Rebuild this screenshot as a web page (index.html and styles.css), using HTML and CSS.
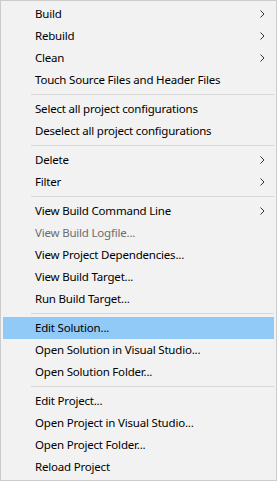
FILE: index.html
```html
<!DOCTYPE html>
<html lang="en">
<head>
  <meta charset="UTF-8">
  <title>Context Menu</title>
  <link rel="stylesheet" href="styles.css">
</head>
<body>
  <!-- CONTEXT MENU -->
  <div class="menu">
    <div class="menu-item">Build<span class="arrow"><svg width="5" height="8" viewBox="0 0 5 8"><path d="M0.5 0.5 L4 4 L0.5 7.5" fill="none" stroke="#333" stroke-width="1"/></svg></span></div>
    <div class="menu-item">Rebuild<span class="arrow"><svg width="5" height="8" viewBox="0 0 5 8"><path d="M0.5 0.5 L4 4 L0.5 7.5" fill="none" stroke="#333" stroke-width="1"/></svg></span></div>
    <div class="menu-item">Clean<span class="arrow"><svg width="5" height="8" viewBox="0 0 5 8"><path d="M0.5 0.5 L4 4 L0.5 7.5" fill="none" stroke="#333" stroke-width="1"/></svg></span></div>
    <div class="menu-item">Touch Source Files and Header Files</div>
    <div class="separator"></div>
    <div class="menu-item">Select all project configurations</div>
    <div class="menu-item">Deselect all project configurations</div>
    <div class="separator"></div>
    <div class="menu-item">Delete<span class="arrow"><svg width="5" height="8" viewBox="0 0 5 8"><path d="M0.5 0.5 L4 4 L0.5 7.5" fill="none" stroke="#333" stroke-width="1"/></svg></span></div>
    <div class="menu-item">Filter<span class="arrow"><svg width="5" height="8" viewBox="0 0 5 8"><path d="M0.5 0.5 L4 4 L0.5 7.5" fill="none" stroke="#333" stroke-width="1"/></svg></span></div>
    <div class="separator"></div>
    <div class="menu-item">View Build Command Line<span class="arrow"><svg width="5" height="8" viewBox="0 0 5 8"><path d="M0.5 0.5 L4 4 L0.5 7.5" fill="none" stroke="#333" stroke-width="1"/></svg></span></div>
    <div class="menu-item disabled">View Build Logfile...</div>
    <div class="menu-item">View Project Dependencies...</div>
    <div class="menu-item">View Build Target...</div>
    <div class="menu-item">Run Build Target...</div>
    <div class="separator"></div>
    <div class="menu-item active">Edit Solution...</div>
    <div class="menu-item">Open Solution in Visual Studio...</div>
    <div class="menu-item">Open Solution Folder...</div>
    <div class="separator"></div>
    <div class="menu-item">Edit Project...</div>
    <div class="menu-item">Open Project in Visual Studio...</div>
    <div class="menu-item">Open Project Folder...</div>
    <div class="menu-item">Reload Project</div>
  </div>
</body>
</html>
```

FILE: styles.css
```css
/* Reset */
* {
  margin: 0;
  padding: 0;
  box-sizing: border-box;
}
body {
  font-family: 'Noto Sans', sans-serif;
  font-size: 11.5px;
  letter-spacing: -0.2px;
  background-color: #fff;
}
/* Menu box */
.menu {
  width: 277px;
  height: 481px;
  background-color: #f2f2f2;
  border: 1px solid #cccccc;
  padding: 2px;
}
.menu-item {
  display: flex;
  align-items: center;
  height: 22px;
  padding-left: 32px;
  padding-right: 9px;
  padding-bottom: 1px;
  color: #000;
  white-space: nowrap;
  cursor: default;
}
.menu-item.disabled {
  color: #6d6d6d;
}
.menu-item.active {
  background-color: #91c9f7;
}
.arrow {
  margin-left: auto;
  display: flex;
  align-items: center;
}
/* Separator line */
.separator {
  height: 7px;
  padding-top: 3px;
  margin-left: 28px;
}
.separator::before {
  content: '';
  display: block;
  border-top: 1px solid #d7d7d7;
}
```
